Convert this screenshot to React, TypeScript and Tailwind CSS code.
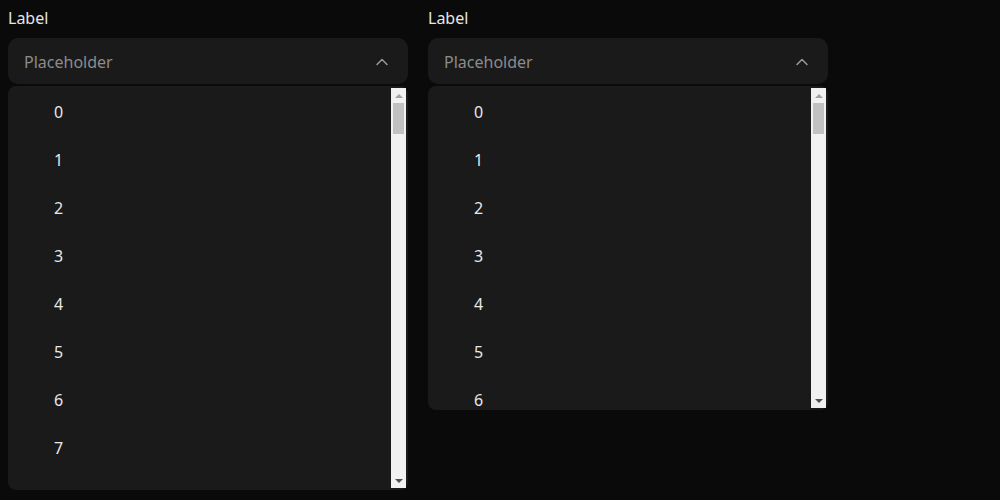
import { ChevronUp } from "lucide-react";

function FakeScrollbar() {
  return (
    <div className="absolute inset-y-0 right-0 flex w-[15px] flex-col bg-[#f1f1f1]">
      <div className="flex h-[15px] items-center justify-center">
        <div className="h-0 w-0 border-x-[4px] border-b-[4px] border-x-transparent border-b-[#a3a3a3]" />
      </div>
      <div className="mx-[2px] h-[31px] bg-[#c1c1c1]" />
      <div className="flex-1" />
      <div className="flex h-[15px] items-center justify-center">
        <div className="h-0 w-0 border-x-[4px] border-t-[4px] border-x-transparent border-t-[#505050]" />
      </div>
    </div>
  );
}

function SelectOpen({ count, listHeight }: { count: number; listHeight: string }) {
  const items = Array.from({ length: count }, (_, i) => String(i));
  return (
    <div className="flex w-[400px] flex-col">
      <label className="h-5 text-base leading-5 text-[#e6e6e6]">Label</label>
      <button className="mt-[10px] flex h-[46px] items-center justify-between rounded-[10px] bg-[#1a1a1a] pl-4 pr-[16px] pt-[2px] text-left text-base text-[#8c8c8c]">
        <span>Placeholder</span>
        <ChevronUp size={20} strokeWidth={1.7} className="text-[#9c9c9c]" />
      </button>
      <div className="mt-[2px] rounded-lg bg-[#1a1a1a] p-[2px]">
        <div className={`relative overflow-hidden ${listHeight}`}>
          <ul>
            {items.map((n) => (
              <li key={n} className="flex h-12 items-center pl-[44px] text-base text-[#e8e8e8]">
                {n}
              </li>
            ))}
          </ul>
          <FakeScrollbar />
        </div>
      </div>
    </div>
  );
}

export default function App() {
  return (
    <div className="min-h-[500px] bg-[#0a0a0a] p-2 font-['Noto_Sans',sans-serif]">
      <div className="flex items-start gap-5">
        <SelectOpen count={8} listHeight="h-[400px]" />
        <SelectOpen count={7} listHeight="h-[320px]" />
      </div>
    </div>
  );
}
